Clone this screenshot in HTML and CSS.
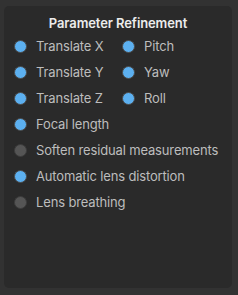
FILE: index.html
```html
<!DOCTYPE html>
<html lang="en">
<head>
  <meta charset="UTF-8">
  <title>Parameter Refinement</title>
  <link rel="stylesheet" href="styles.css">
</head>
<body>

<div class="panel">
  <h3 class="panel-title">Parameter Refinement</h3>
  <div class="options">
    <div class="row">
      <label class="opt col-a"><span class="dot on"></span>Translate X</label>
      <label class="opt"><span class="dot on"></span>Pitch</label>
    </div>
    <div class="row">
      <label class="opt col-a"><span class="dot on"></span>Translate Y</label>
      <label class="opt"><span class="dot on"></span>Yaw</label>
    </div>
    <div class="row">
      <label class="opt col-a"><span class="dot on"></span>Translate Z</label>
      <label class="opt"><span class="dot on"></span>Roll</label>
    </div>
    <div class="row">
      <label class="opt"><span class="dot on"></span>Focal length</label>
    </div>
    <div class="row">
      <label class="opt"><span class="dot"></span>Soften residual measurements</label>
    </div>
    <div class="row">
      <label class="opt"><span class="dot on"></span>Automatic lens distortion</label>
    </div>
    <div class="row">
      <label class="opt"><span class="dot"></span>Lens breathing</label>
    </div>
  </div>
</div>

</body>
</html>
```

FILE: styles.css
```css
html, body {
  margin: 0;
  background: #323232;
}
body {
  font-family: Inter, "Noto Sans", sans-serif;
  padding: 6px 6px 7px 4px;
  height: 295px;
  box-sizing: border-box;
}
.panel {
  background: #2a2a2a;
  border-radius: 5px;
  height: 100%;
  padding: 9px 0 0 10px;
  box-sizing: border-box;
}
.panel-title {
  margin: 0 0 0 -10px;
  text-align: center;
  font-size: 13px;
  font-weight: 600;
  letter-spacing: -0.1px;
  color: #ececec;
  line-height: 16px;
}
.options {
  margin-top: 2px;
}
.row {
  display: flex;
  height: 26px;
  align-items: center;
}
.opt {
  display: flex;
  align-items: center;
  font-size: 13px;
  letter-spacing: -0.15px;
  color: #bdbdbd;
}
.col-a {
  width: 108px;
}
.dot {
  width: 11px;
  height: 11px;
  border-radius: 50%;
  background: #555;
  border: 1px solid #3c3c3c;
  margin-right: 9px;
  box-sizing: content-box;
}
.dot.on {
  background: #5cb0f0;
  border-color: #4a4a4a;
}
```
